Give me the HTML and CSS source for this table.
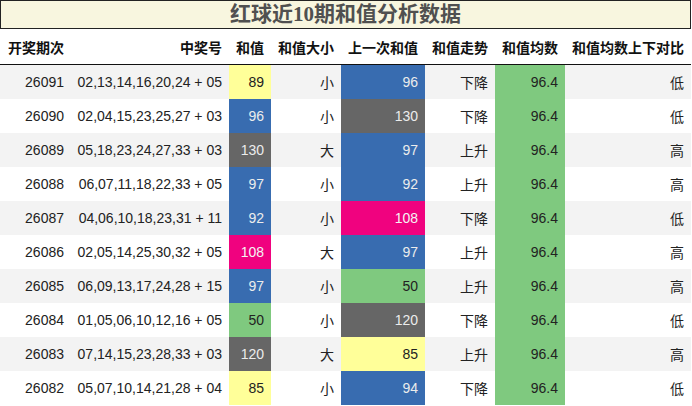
FILE: index.html
```html
<!DOCTYPE html>
<html lang="zh">
<head>
<meta charset="utf-8">
<link rel="stylesheet" href="styles.css">
</head>
<body>
<div class="title">红球近10期和值分析数据</div>
<table class="data">
  <colgroup>
    <col class="c1"><col class="c2"><col class="c3"><col class="c4"><col class="c5"><col class="c6"><col class="c7"><col class="c8">
  </colgroup>
  <thead>
    <tr><th>开奖期次</th><th>中奖号</th><th>和值</th><th>和值大小</th><th>上一次和值</th><th>和值走势</th><th>和值均数</th><th>和值均数上下对比</th></tr>
  </thead>
  <tbody>
    <tr><td>26091</td><td>02,13,14,16,20,24 + 05</td><td class="y">89</td><td>小</td><td class="b">96</td><td>下降</td><td class="g">96.4</td><td>低</td></tr>
    <tr><td>26090</td><td>02,04,15,23,25,27 + 03</td><td class="b">96</td><td>小</td><td class="k">130</td><td>下降</td><td class="g">96.4</td><td>低</td></tr>
    <tr><td>26089</td><td>05,18,23,24,27,33 + 03</td><td class="k">130</td><td>大</td><td class="b">97</td><td>上升</td><td class="g">96.4</td><td>高</td></tr>
    <tr><td>26088</td><td>06,07,11,18,22,33 + 05</td><td class="b">97</td><td>小</td><td class="b">92</td><td>上升</td><td class="g">96.4</td><td>高</td></tr>
    <tr><td>26087</td><td>04,06,10,18,23,31 + 11</td><td class="b">92</td><td>小</td><td class="p">108</td><td>下降</td><td class="g">96.4</td><td>低</td></tr>
    <tr><td>26086</td><td>02,05,14,25,30,32 + 05</td><td class="p">108</td><td>大</td><td class="b">97</td><td>上升</td><td class="g">96.4</td><td>高</td></tr>
    <tr><td>26085</td><td>06,09,13,17,24,28 + 15</td><td class="b">97</td><td>小</td><td class="g">50</td><td>上升</td><td class="g">96.4</td><td>高</td></tr>
    <tr><td>26084</td><td>01,05,06,10,12,16 + 05</td><td class="g">50</td><td>小</td><td class="k">120</td><td>下降</td><td class="g">96.4</td><td>低</td></tr>
    <tr><td>26083</td><td>07,14,15,23,28,33 + 03</td><td class="k">120</td><td>大</td><td class="y">85</td><td>上升</td><td class="g">96.4</td><td>高</td></tr>
    <tr><td>26082</td><td>05,07,10,14,21,28 + 04</td><td class="y">85</td><td>小</td><td class="b">94</td><td>下降</td><td class="g">96.4</td><td>低</td></tr>
  </tbody>
</table>
</body>
</html>
```
FILE: styles.css
```css
html, body {
  margin: 0;
  padding: 0;
  background: #ffffff;
}
body {
  font-family: "Liberation Sans", "Noto Sans CJK SC", sans-serif;
  color: #222;
}
.title {
  box-sizing: border-box;
  width: 691px;
  height: 29px;
  border: 1px solid #222;
  background: #f8f6df;
  color: #505050;
  font-family: "Liberation Serif", "Noto Sans CJK SC", serif;
  font-weight: bold;
  font-size: 21px;
  line-height: 27px;
  text-align: center;
}
.data {
  border-collapse: collapse;
  table-layout: fixed;
  width: 691px;
  font-size: 14px;
}
.c1 { width: 71px; }
.c2 { width: 158px; }
.c3 { width: 42px; }
.c4 { width: 70px; }
.c5 { width: 84px; }
.c6 { width: 70px; }
.c7 { width: 70px; }
.c8 { width: 126px; }
.data th {
  height: 35px;
  padding: 0 7px 0 0;
  text-align: right;
  font-weight: bold;
  color: #111;
  border-bottom: 1px solid #111;
  white-space: nowrap;
}
.data td {
  height: 34px;
  padding: 0 7px 0 0;
  text-align: right;
  white-space: nowrap;
  color: #222;
}
.data tbody tr:nth-child(odd) td { background: #f3f3f3; }
.data tbody tr:nth-child(even) td { background: #ffffff; }
.data tbody tr td.y { background: #ffff99; color: #222; }
.data tbody tr td.b { background: #386cb0; color: #ececec; }
.data tbody tr td.k { background: #666666; color: #ececec; }
.data tbody tr td.p { background: #f0027f; color: #f4f4f4; }
.data tbody tr td.g { background: #7fc97f; color: #222; }
```
